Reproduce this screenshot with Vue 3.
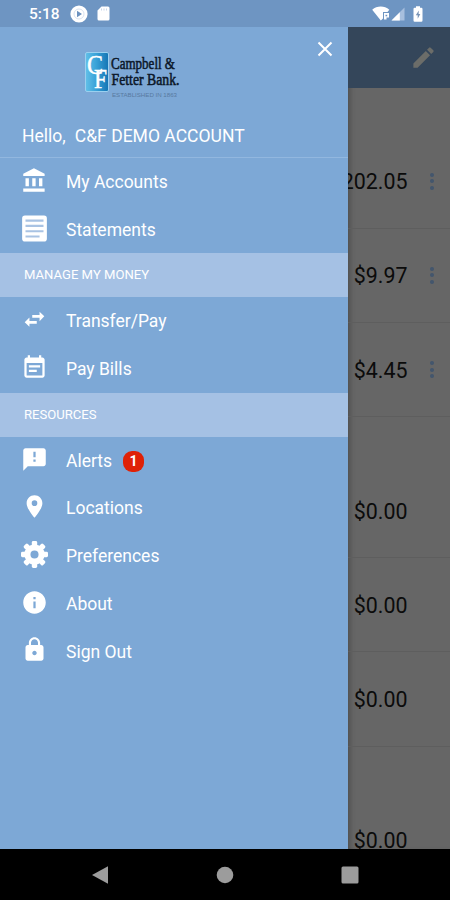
<script setup>
const icons = {
  bank: 'M4 10v7h3v-7H4zm6 0v7h3v-7h-3zM2 22h19v-3H2v3zm14-12v7h3v-7h-3zm-4.500-9L2 6v2h19V6l-9.500-5z',
  statement: 'M3.500.5h17A2.500 2.500 0 0 1 23 3v18a2.500 2.500 0 0 1-2.500 2.500h-17A2.500 2.500 0 0 1 1 21V3A2.500 2.500 0 0 1 3.500.5z',
  transfer: 'M7.500 10.200L3.300 14.500l4.200 4v-2.800H14v-2.400H7.500v-3.100zM20.700 9.200l-4.200-4v2.800H10v2.400h6.500v3.100l4.200-4.300z',
  bills: 'M17 10H7v2h10v-2zm2-7h-1V1h-2v2H8V1H6v2H5c-1.110 0-1.990.9-1.990 2L3 19c0 1.100.89 2 2 2h14c1.100 0 2-.9 2-2V5c0-1.100-.9-2-2-2zm0 16H5V8h14v11zm-5-5H7v2h7v-2z',
  alert: 'M20 2H4c-1.100 0-1.990.9-1.990 2L2 22l4-4h14c1.100 0 2-.9 2-2V4c0-1.100-.9-2-2-2zm-7 12h-2v-2h2v2zm0-4h-2V5h2v5z',
  place: 'M12 2C8.130 2 5 5.130 5 9c0 5.250 7 13 7 13s7-7.750 7-13c0-3.870-3.130-7-7-7zm0 9.500a2.500 2.500 0 0 1 0-5 2.500 2.500 0 0 1 0 5z',
  info: 'M12 2C6.480 2 2 6.480 2 12s4.480 10 10 10 10-4.480 10-10S17.520 2 12 2zm1 15h-2v-6h2v6zm0-8h-2V7h2v2z',
  lock: 'M18 8h-1V6c0-2.760-2.240-5-5-5S7 3.240 7 6v2H6c-1.100 0-2 .9-2 2v10c0 1.100.9 2 2 2h12c1.100 0 2-.9 2-2V10c0-1.100-.9-2-2-2zm-6 9c-1.100 0-2-.9-2-2s.9-2 2-2 2 .9 2 2-.9 2-2 2zm3.100-9H8.900V6c0-1.710 1.390-3.100 3.100-3.100 1.710 0 3.100 1.390 3.100 3.100v2z',
}

const groups = [
  { title: '', items: [{ label: 'My Accounts', icon: 'bank' }, { label: 'Statements', icon: 'statement' }] },
  { title: 'MANAGE MY MONEY', items: [{ label: 'Transfer/Pay', icon: 'transfer' }, { label: 'Pay Bills', icon: 'bills' }] },
  {
    title: 'RESOURCES',
    items: [
      { label: 'Alerts', icon: 'alert', badge: '1' },
      { label: 'Locations', icon: 'place' },
      { label: 'Preferences', icon: 'gear' },
      { label: 'About', icon: 'info' },
      { label: 'Sign Out', icon: 'lock' },
    ],
  },
]

const balances = [
  { menu: true, amounts: ['$202.05', '$9.97', '$4.45'] },
  { menu: false, amounts: ['$0.00', '$0.00', '$0.00'] },
  { menu: false, amounts: ['$0.00'] },
]
const teeth = [0, 45, 90, 135, 180, 225, 270, 315]
</script>

<template>
  <div class="phone">
    <header class="status">
      <span class="clock">5:18</span>
      <svg class="st-play" viewBox="0 0 18 18"><circle cx="9" cy="9" r="8.600" fill="#fff" /><circle cx="9" cy="9" r="5" fill="none" stroke="#c5d4e8" stroke-width=".7" /><path d="M7 5.800v6.400L12 9z" fill="#6c92c0" /></svg>
      <svg class="st-card" viewBox="0 0 13 15"><path d="M4.500.5H11a1.500 1.500 0 0 1 1.500 1.500v11a1.500 1.500 0 0 1-1.500 1.500H2A1.500 1.500 0 0 1 .5 13V4.500z" fill="#fff" /><path d="M4.500 2.500v2M7 2.500v2M9.500 2.500v2" stroke="#c3d3e8" stroke-width=".9" /></svg>
      <span class="spacer"></span>
      <svg class="st-wifi" viewBox="0 0 18 15"><path d="M.2 3.800C5-.6 12.500-.6 17.300 3.800L15.500 6H11v6.500L8.800 14.500z" fill="#fff" /><path d="M12 7h5v4.500h-2.500v2H12z" fill="#fff" /><path d="M13.500 8.800h1.700v1.500h-1.700z" fill="#6c92c0" /></svg>
      <svg class="st-signal" viewBox="0 0 14 14"><path d="M13.500.5v13H.5z" fill="#a7bfde" /><path d="M8.800 5.200v8.300H.5z" fill="#fff" /></svg>
      <svg class="st-battery" viewBox="0 0 10 16"><path d="M3 .3h4v1.500h1.300A1.200 1.200 0 0 1 9.500 3v11.500a1.200 1.200 0 0 1-1.200 1.200H1.700A1.200 1.200 0 0 1 .5 14.500V3a1.200 1.200 0 0 1 1.200-1.200H3z" fill="#fff" /><path d="M5.800 4.500L2.800 9.200h1.900v3.500l2.600-4.700H5.600z" fill="#7893b5" /></svg>
    </header>

    <div class="body">
      <nav class="drawer">
        <div class="brand">
          <svg class="logo" viewBox="0 0 98 50">
            <defs>
              <linearGradient id="tile" x1="0" y1="0" x2="1" y2="0">
                <stop offset="0" stop-color="#63c0e8" /><stop offset=".45" stop-color="#3aa3d8" /><stop offset="1" stop-color="#1474b4" />
              </linearGradient>
            </defs>
            <rect x="1.500" y="1.500" width="23" height="39" rx="1.500" fill="url(#tile)" stroke="#9bd0ef" stroke-width="1" />
            <g fill="#fff" stroke="#fff" stroke-width=".5" font-family="Liberation Serif, serif">
              <text x="3" y="22.500" font-size="28" textLength="16" lengthAdjust="spacingAndGlyphs">C</text>
              <text x="10" y="37" font-size="28" textLength="13" lengthAdjust="spacingAndGlyphs">F</text>
            </g>
            <g fill="#0b1728" stroke="#0b1728" stroke-width=".55" font-family="Liberation Serif, serif" font-size="17">
              <text x="27" y="18" textLength="64" lengthAdjust="spacingAndGlyphs">Campbell &amp;</text>
              <text x="27.500" y="34" textLength="68" lengthAdjust="spacingAndGlyphs">Fetter Bank.</text>
            </g>
            <text x="28" y="46" font-family="Liberation Sans, sans-serif" font-size="6" fill="#58799f" textLength="65" lengthAdjust="spacingAndGlyphs">ESTABLISHED IN 1863</text>
          </svg>
          <svg class="close" viewBox="0 0 16 16"><path d="M1.500 1.500l13 13M14.500 1.500l-13 13" stroke="#fff" stroke-width="2" /></svg>
        </div>
        <div class="hello"><span>Hello,</span><span>C&amp;F DEMO ACCOUNT</span></div>
        <section v-for="g in groups" :key="g.title">
          <h2 v-if="g.title" class="title">{{ g.title }}</h2>
          <a v-for="i in g.items" :key="i.label" class="item">
            <svg class="icon" viewBox="0 0 24 24" fill="#fff">
              <g v-if="i.icon === 'gear'">
                <circle cx="12" cy="12" r="6.300" fill="none" stroke="#fff" stroke-width="5.400" />
                <rect v-for="t in teeth" :key="t" x="9.600" y="0" width="4.800" height="6" rx="1.300" :transform="`rotate(${t} 12 12)`" />
              </g>
              <path v-else fill-rule="evenodd" :d="icons[i.icon]" />
              <path v-if="i.icon === 'statement'" d="M4 5h16M4 9.700h16M4 14.400h16M4 19.100h12.500" stroke="#a9c3e3" stroke-width="1.900" />
            </svg>
            <span class="label">{{ i.label }}</span>
            <span v-if="i.badge" class="badge">{{ i.badge }}</span>
          </a>
        </section>
      </nav>

      <main class="page">
        <div class="toolbar">
          <svg class="pencil" viewBox="0 0 24 24"><path fill="#6c6d69" d="M3 17.250V21h3.750L17.810 9.940l-3.750-3.750L3 17.250zM20.710 7.040a1 1 0 0 0 0-1.410l-2.340-2.340a1 1 0 0 0-1.410 0l-1.830 1.830 3.750 3.750 1.830-1.830z" /></svg>
        </div>
        <div v-for="(b, n) in balances" :key="n" class="accounts">
          <div v-for="(a, k) in b.amounts" :key="k" class="account">
            <span class="amount">{{ a }}</span>
            <span v-if="b.menu" class="dots"><i></i><i></i><i></i></span>
          </div>
        </div>
      </main>
    </div>

    <footer class="nav">
      <svg class="nav-icon" viewBox="0 0 18 18"><path d="M17 .3v17.400L1 9z" /></svg>
      <svg class="nav-icon" viewBox="0 0 18 18"><circle cx="9" cy="9" r="8.300" /></svg>
      <svg class="nav-icon" viewBox="0 0 18 18"><rect x=".5" y=".5" width="17" height="17" rx="1.500" /></svg>
    </footer>
  </div>
</template>

<style>
body { margin: 0; background: #000; }
</style>

<style scoped>
.phone { width: 450px; height: 900px; display: flex; flex-direction: column; overflow: hidden; font-family: Roboto, sans-serif; color: #fff; }
.phone svg { display: block; flex: none; }
.status { height: 27px; flex: none; box-sizing: border-box; display: flex; align-items: center; padding: 0 27px 0 29px; background: #6e95c2; }
.clock { width: 31px; font-size: 15.500px; font-weight: 500; line-height: 27px; white-space: nowrap; padding-top: 2px; }
.st-play { width: 18px; height: 18px; margin-left: 10px; }
.st-card { width: 13px; height: 15px; margin-left: 9px; }
.spacer { flex: 1; }
.st-wifi { width: 18px; height: 15px; }
.st-signal { width: 14px; height: 14px; margin-left: 1px; }
.st-battery { width: 10px; height: 16px; margin-left: 8px; }

.body { height: 822px; flex: none; display: flex; overflow: hidden; }
.drawer { width: 348px; flex: none; background: #7da8d6; }
.brand { height: 87px; display: flex; justify-content: space-between; align-items: flex-start; padding: 0 15px 0 84px; }
.logo { width: 98px; height: 50px; margin-top: 24px; overflow: visible; }
.close { width: 16px; height: 16px; margin-top: 14px; }
.hello { height: 43px; display: flex; gap: 9px; padding-left: 22px; line-height: 44px; font-size: 17.550px; border-bottom: 1px solid #92b7df; white-space: nowrap; }
.title { margin: 0; height: 44px; padding-left: 24px; background: #a5c1e4; font-size: 13.100px; font-weight: 400; line-height: 44px; }
.item { height: 47.700px; display: flex; align-items: center; padding-left: 20.500px; }
.icon { width: 27px; height: 27px; margin-bottom: 3px; }
.label { margin-left: 18.500px; font-size: 17.500px; line-height: 24px; padding-top: 0.400px; }
.badge { width: 21px; height: 21px; margin: 1px 0 0 11px; border-radius: 9px; background: #df2106; font-size: 14px; font-weight: 700; line-height: 21px; text-align: center; }

.page { flex: 1; min-width: 0; overflow: hidden; background: #666; box-shadow: inset 5px 0 5px -3px #4e4e4e; }
.toolbar { height: 61px; display: flex; justify-content: flex-end; align-items: center; padding-right: 13px; background: #34465a; }
.pencil { width: 27px; height: 27px; }
.accounts { padding-top: 46.500px; }
.account { height: 94.300px; box-sizing: border-box; display: flex; align-items: center; justify-content: flex-end; padding-right: 42.500px; border-bottom: 1px solid #5e5e5e; position: relative; }
.amount { color: #0b0b0b; font-size: 21.400px; line-height: 26px; padding-top: 2px; }
.dots { position: absolute; right: 16px; display: flex; flex-direction: column; gap: 2.500px; }
.dots i { width: 4px; height: 4px; border-radius: 50%; background: #43566d; }

.nav { flex: 1; display: flex; justify-content: center; align-items: center; gap: 107px; background: #000; }
.nav-icon { width: 18px; height: 18px; fill: #9c9c9c; }
</style>
